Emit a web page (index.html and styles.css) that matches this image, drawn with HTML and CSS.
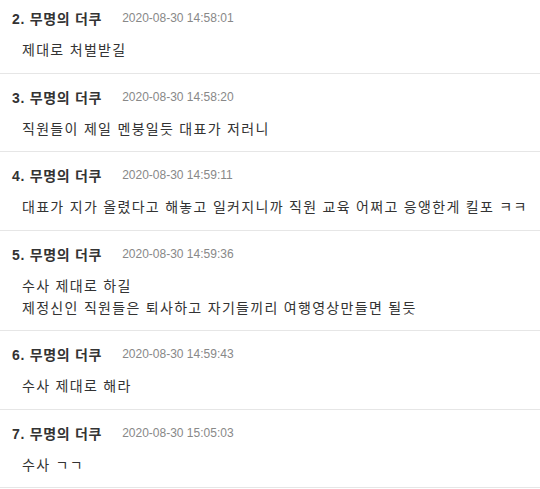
FILE: index.html
```html
<!DOCTYPE html>
<html lang="ko">
  <head>
    <meta charset="UTF-8" />
    <title>댓글</title>
    <link rel="stylesheet" href="styles.css">
  </head>
  <body>
    <ul class="comment-list">
      <li class="comment">
        <div class="comment-head">
          <span class="comment-author">2. 무명의 더쿠</span>
          <span class="comment-date">2020-08-30 14:58:01</span>
        </div>
        <div class="comment-body">제대로 처벌받길</div>
      </li>
      <li class="comment">
        <div class="comment-head">
          <span class="comment-author">3. 무명의 더쿠</span>
          <span class="comment-date">2020-08-30 14:58:20</span>
        </div>
        <div class="comment-body">직원들이 제일 멘붕일듯 대표가 저러니</div>
      </li>
      <li class="comment">
        <div class="comment-head">
          <span class="comment-author">4. 무명의 더쿠</span>
          <span class="comment-date">2020-08-30 14:59:11</span>
        </div>
        <div class="comment-body">대표가 지가 올렸다고 해놓고 일커지니까 직원 교육 어쩌고 응앵한게 킬포 ㅋㅋ</div>
      </li>
      <li class="comment">
        <div class="comment-head">
          <span class="comment-author">5. 무명의 더쿠</span>
          <span class="comment-date">2020-08-30 14:59:36</span>
        </div>
        <div class="comment-body">수사 제대로 하길<br />제정신인 직원들은 퇴사하고 자기들끼리 여행영상만들면 될듯</div>
      </li>
      <li class="comment">
        <div class="comment-head">
          <span class="comment-author">6. 무명의 더쿠</span>
          <span class="comment-date">2020-08-30 14:59:43</span>
        </div>
        <div class="comment-body">수사 제대로 해라</div>
      </li>
      <li class="comment">
        <div class="comment-head">
          <span class="comment-author">7. 무명의 더쿠</span>
          <span class="comment-date">2020-08-30 15:05:03</span>
        </div>
        <div class="comment-body">수사 ㄱㄱ</div>
      </li>
    </ul>
  </body>
</html>
```

FILE: styles.css
```css
* {
  margin: 0;
  padding: 0;
  box-sizing: border-box;
}

body {
  font-family: "Liberation Sans", "Noto Sans CJK KR", sans-serif;
  background: #fff;
  color: #333;
  overflow: hidden;
}

/* list is scrolled a little, first item is cut at the top */
.comment-list {
  list-style: none;
  margin-top: -5px;
}

.comment {
  padding: 14px 0 11.5px;
  border-bottom: 1px solid #e6e6e6;
}

.comment-head {
  display: flex;
  align-items: center;
  height: 18px;
  padding-left: 12px;
}

.comment-author {
  font-size: 14px;
  font-weight: bold;
  letter-spacing: 0.7px;
  color: #333;
}

.comment-date {
  margin-left: 20px;
  font-size: 12px;
  color: #888;
}

.comment-body {
  margin-top: 12px;
  padding-left: 22px;
  font-size: 14px;
  line-height: 22px;
  letter-spacing: 1.3px;
  color: #333;
}
```
